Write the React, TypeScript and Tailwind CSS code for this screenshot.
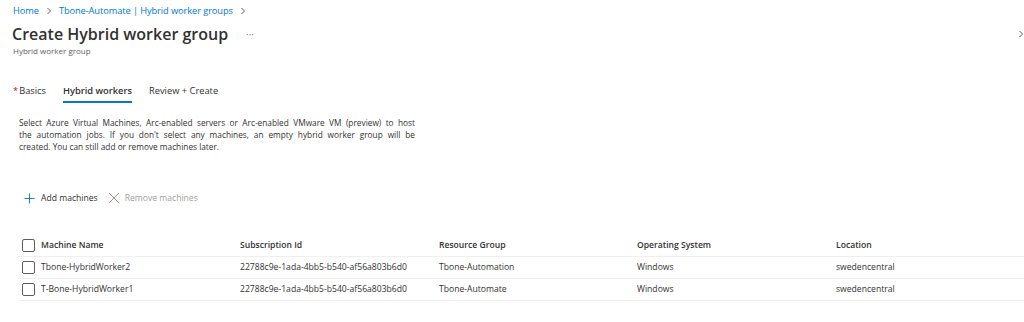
import React from "react";

const font = { fontFamily: '"Open Sans", "Liberation Sans", sans-serif' };

type Machine = {
  name: string;
  subscription: string;
  group: string;
  os: string;
  location: string;
};

const machines: Machine[] = [
  {
    name: "Tbone-HybridWorker2",
    subscription: "22788c9e-1ada-4bb5-b540-af56a803b6d0",
    group: "Tbone-Automation",
    os: "Windows",
    location: "swedencentral",
  },
  {
    name: "T-Bone-HybridWorker1",
    subscription: "22788c9e-1ada-4bb5-b540-af56a803b6d0",
    group: "Tbone-Automate",
    os: "Windows",
    location: "swedencentral",
  },
];

function Checkbox() {
  return <div className="size-[13px] shrink-0 rounded-[2px] border border-[#605e5c] bg-white" />;
}

function Chevron({ className }: { className?: string }) {
  return (
    <svg viewBox="0 0 8 8" className={className} fill="none" stroke="currentColor" strokeWidth="1">
      <path d="M2.5 1 L5.5 4 L2.5 7" />
    </svg>
  );
}

export default function App() {
  return (
    <div className="relative h-[322px] w-[1024px] overflow-hidden bg-white text-[#323130]" style={font}>
      <Chevron className="absolute left-[1017px] top-[30px] size-[8px] text-[#605e5c]" />

      <div className="flex h-[22px] items-center gap-[6px] pl-[13px] text-[9.3px] tracking-[-0.1px] text-[#0078d4]">
        <span>Home</span>
        <Chevron className="size-[8px] text-[#605e5c]" />
        <span>Tbone-Automate | Hybrid worker groups</span>
        <Chevron className="size-[8px] text-[#605e5c]" />
      </div>

      <div className="flex h-[24px] items-center pl-[12px]">
        <h1 className="text-[16px] font-semibold">Create Hybrid worker group</h1>
        <span className="ml-[18px] text-[10px] text-[#8a8886]">···</span>
      </div>
      <p className="pl-[13px] text-[8px] leading-[10px] text-[#605e5c]">Hybrid worker group</p>

      <div className="mt-[23px] flex h-[24px] items-start gap-[17px] pl-[13px] text-[9.3px]">
        <div className="flex h-[24px] items-center">
          <span className="mr-[1px] text-[#a4262c]">*</span>
          <span>Basics</span>
        </div>
        <div className="flex h-[24px] items-center border-b-2 border-[#0078d4] pt-[2px] font-semibold">
          Hybrid workers
        </div>
        <div className="flex h-[24px] items-center">Review + Create</div>
      </div>

      <div className="ml-[19px] mt-[14px] w-[396px] text-[8.3px] leading-[12px] text-[#323130]">
        <div className="whitespace-nowrap text-justify [text-align-last:justify]">
          Select Azure Virtual Machines, Arc-enabled servers or Arc-enabled VMware VM (preview) to host
        </div>
        <div className="whitespace-nowrap text-justify [text-align-last:justify]">
          the automation jobs. If you don't select any machines, an empty hybrid worker group will be
        </div>
        <div>created. You can still add or remove machines later.</div>
      </div>

      <div className="mt-[34px] flex h-[22px] items-center pl-[24px] text-[8.6px]">
        <svg viewBox="0 0 12 12" className="size-[11px] text-[#0078d4]" fill="none" stroke="currentColor" strokeWidth="1">
          <path d="M6 0.5 V11.5 M0.5 6 H11.5" />
        </svg>
        <span className="ml-[6px]">Add machines</span>
        <svg viewBox="0 0 12 12" className="ml-[10px] size-[12px] text-[#8a8886]" fill="none" stroke="currentColor" strokeWidth="0.9">
          <path d="M1 1 L11 11 M11 1 L1 11" />
        </svg>
        <span className="ml-[5px] text-[#a19f9d]">Remove machines</span>
      </div>

      <div className="ml-[18px] mt-[25px] text-[8.6px]">
        <div className="grid h-[23px] grid-cols-[222px_199px_198px_199px_1fr] items-center border-b border-[#f0efee] font-semibold">
          <div className="flex items-center gap-[6px] pl-[4px]">
            <Checkbox />
            <span>Machine Name</span>
          </div>
          <span>Subscription Id</span>
          <span>Resource Group</span>
          <span>Operating System</span>
          <span>Location</span>
        </div>
        {machines.map((m) => (
          <div
            key={m.name}
            className="grid h-[22px] grid-cols-[222px_199px_198px_199px_1fr] items-center border-b border-[#f0efee]"
          >
            <div className="flex items-center gap-[6px] pl-[4px]">
              <Checkbox />
              <span>{m.name}</span>
            </div>
            <span>{m.subscription}</span>
            <span>{m.group}</span>
            <span>{m.os}</span>
            <span>{m.location}</span>
          </div>
        ))}
      </div>
    </div>
  );
}
